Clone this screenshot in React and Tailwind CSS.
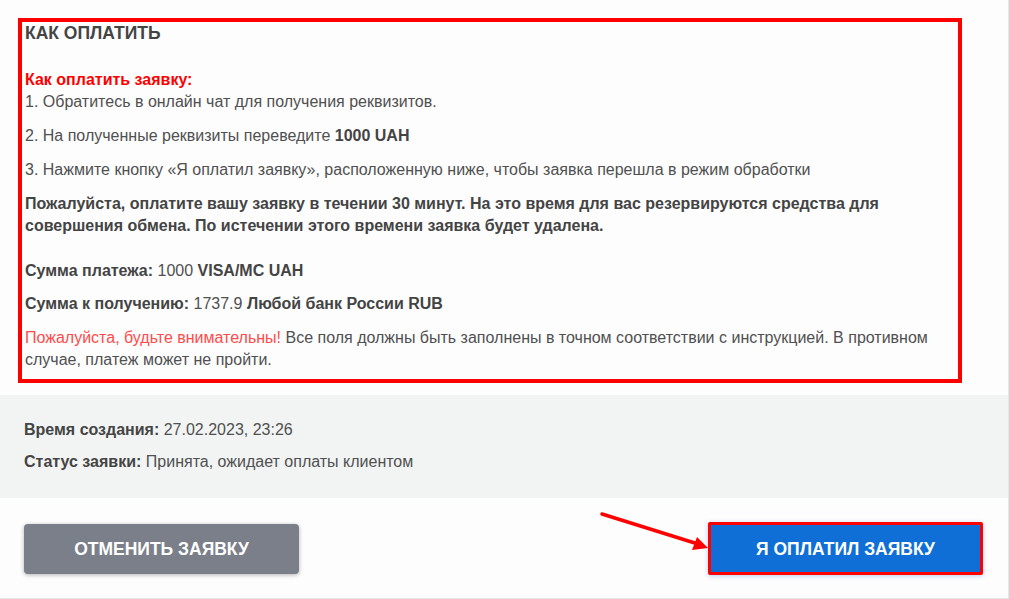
import React from 'react';

const Arrow = () => (
  <svg className="absolute left-[598px] top-[510px]" width="114" height="44" viewBox="0 0 114 44">
    <line x1="4" y1="4" x2="100" y2="34" stroke="#ff0000" strokeWidth="3.5" strokeLinecap="round" />
    <polygon points="110,38 94,40 99,27" fill="#ff0000" />
  </svg>
);

const App = () => (
  <div
    className="relative w-full h-[599px] bg-[#fdfdfd] border-r border-b border-[#e6e6e6] text-[16px] leading-[22px] text-[#505050]"
    style={{ fontFamily: '"Liberation Sans", Arial, sans-serif' }}
  >
    <div className="pt-[18px] pl-[18px] pr-[46px]">
      <div className="border-4 border-[#ff0000] pl-[3px] pb-[8px]">
        <h2 className="font-bold text-[17.5px] leading-[22px] text-[#444]">КАК ОПЛАТИТЬ</h2>
        <p className="mt-[25px] font-bold text-[#ff0000]">Как оплатить заявку:</p>
        <p>1. Обратитесь в онлайн чат для получения реквизитов.</p>
        <p className="mt-[12px]">
          2. На полученные реквизиты переведите <b className="text-[#444]">1000 UAH</b>
        </p>
        <p className="mt-[12px]">
          3. Нажмите кнопку «Я оплатил заявку», расположенную ниже, чтобы заявка перешла в режим обработки
        </p>
        <p className="mt-[12px] font-bold text-[#444]">
          Пожалуйста, оплатите вашу заявку в течении 30 минут. На это время для вас резервируются средства для
          совершения обмена. По истечении этого времени заявка будет удалена.
        </p>
        <p className="mt-[23px]">
          <b className="text-[#444]">Сумма платежа:</b> 1000 <b className="text-[#444]">VISA/MC UAH</b>
        </p>
        <p className="mt-[11px]">
          <b className="text-[#444]">Сумма к получению:</b> 1737.9{' '}
          <b className="text-[#444]">Любой банк России RUB</b>
        </p>
        <p className="mt-[12px]">
          <span className="text-[#ff4b4b]">Пожалуйста, будьте внимательны!</span> Все поля должны быть заполнены в
          точном соответствии с инструкцией. В противном случае, платеж может не пройти.
        </p>
      </div>
    </div>

    <div className="mt-[12px] h-[103px] bg-[#f1f4f3] pl-[24px] pt-[24px]">
      <p>
        <b className="text-[#444]">Время создания:</b> 27.02.2023, 23:26
      </p>
      <p className="mt-[10px]">
        <b className="text-[#444]">Статус заявки:</b> Принята, ожидает оплаты клиентом
      </p>
    </div>

    <div className="flex items-center justify-between pl-[24px] pr-[25px] pt-[24px]">
      <button className="w-[275px] h-[50px] rounded-[4px] bg-[#7b7f8a] text-white font-bold text-[17.5px] uppercase shadow-[0_1px_4px_rgba(0,0,0,0.3)]">
        Отменить заявку
      </button>
      <button className="w-[275px] h-[53px] border-[3px] border-[#ff0000] rounded-[2px] bg-[#0f6fd6] text-white font-bold text-[17.5px] uppercase shadow-[0_1px_5px_rgba(0,60,200,0.25)]">
        Я оплатил заявку
      </button>
    </div>

    <Arrow />
  </div>
);

export default App;
